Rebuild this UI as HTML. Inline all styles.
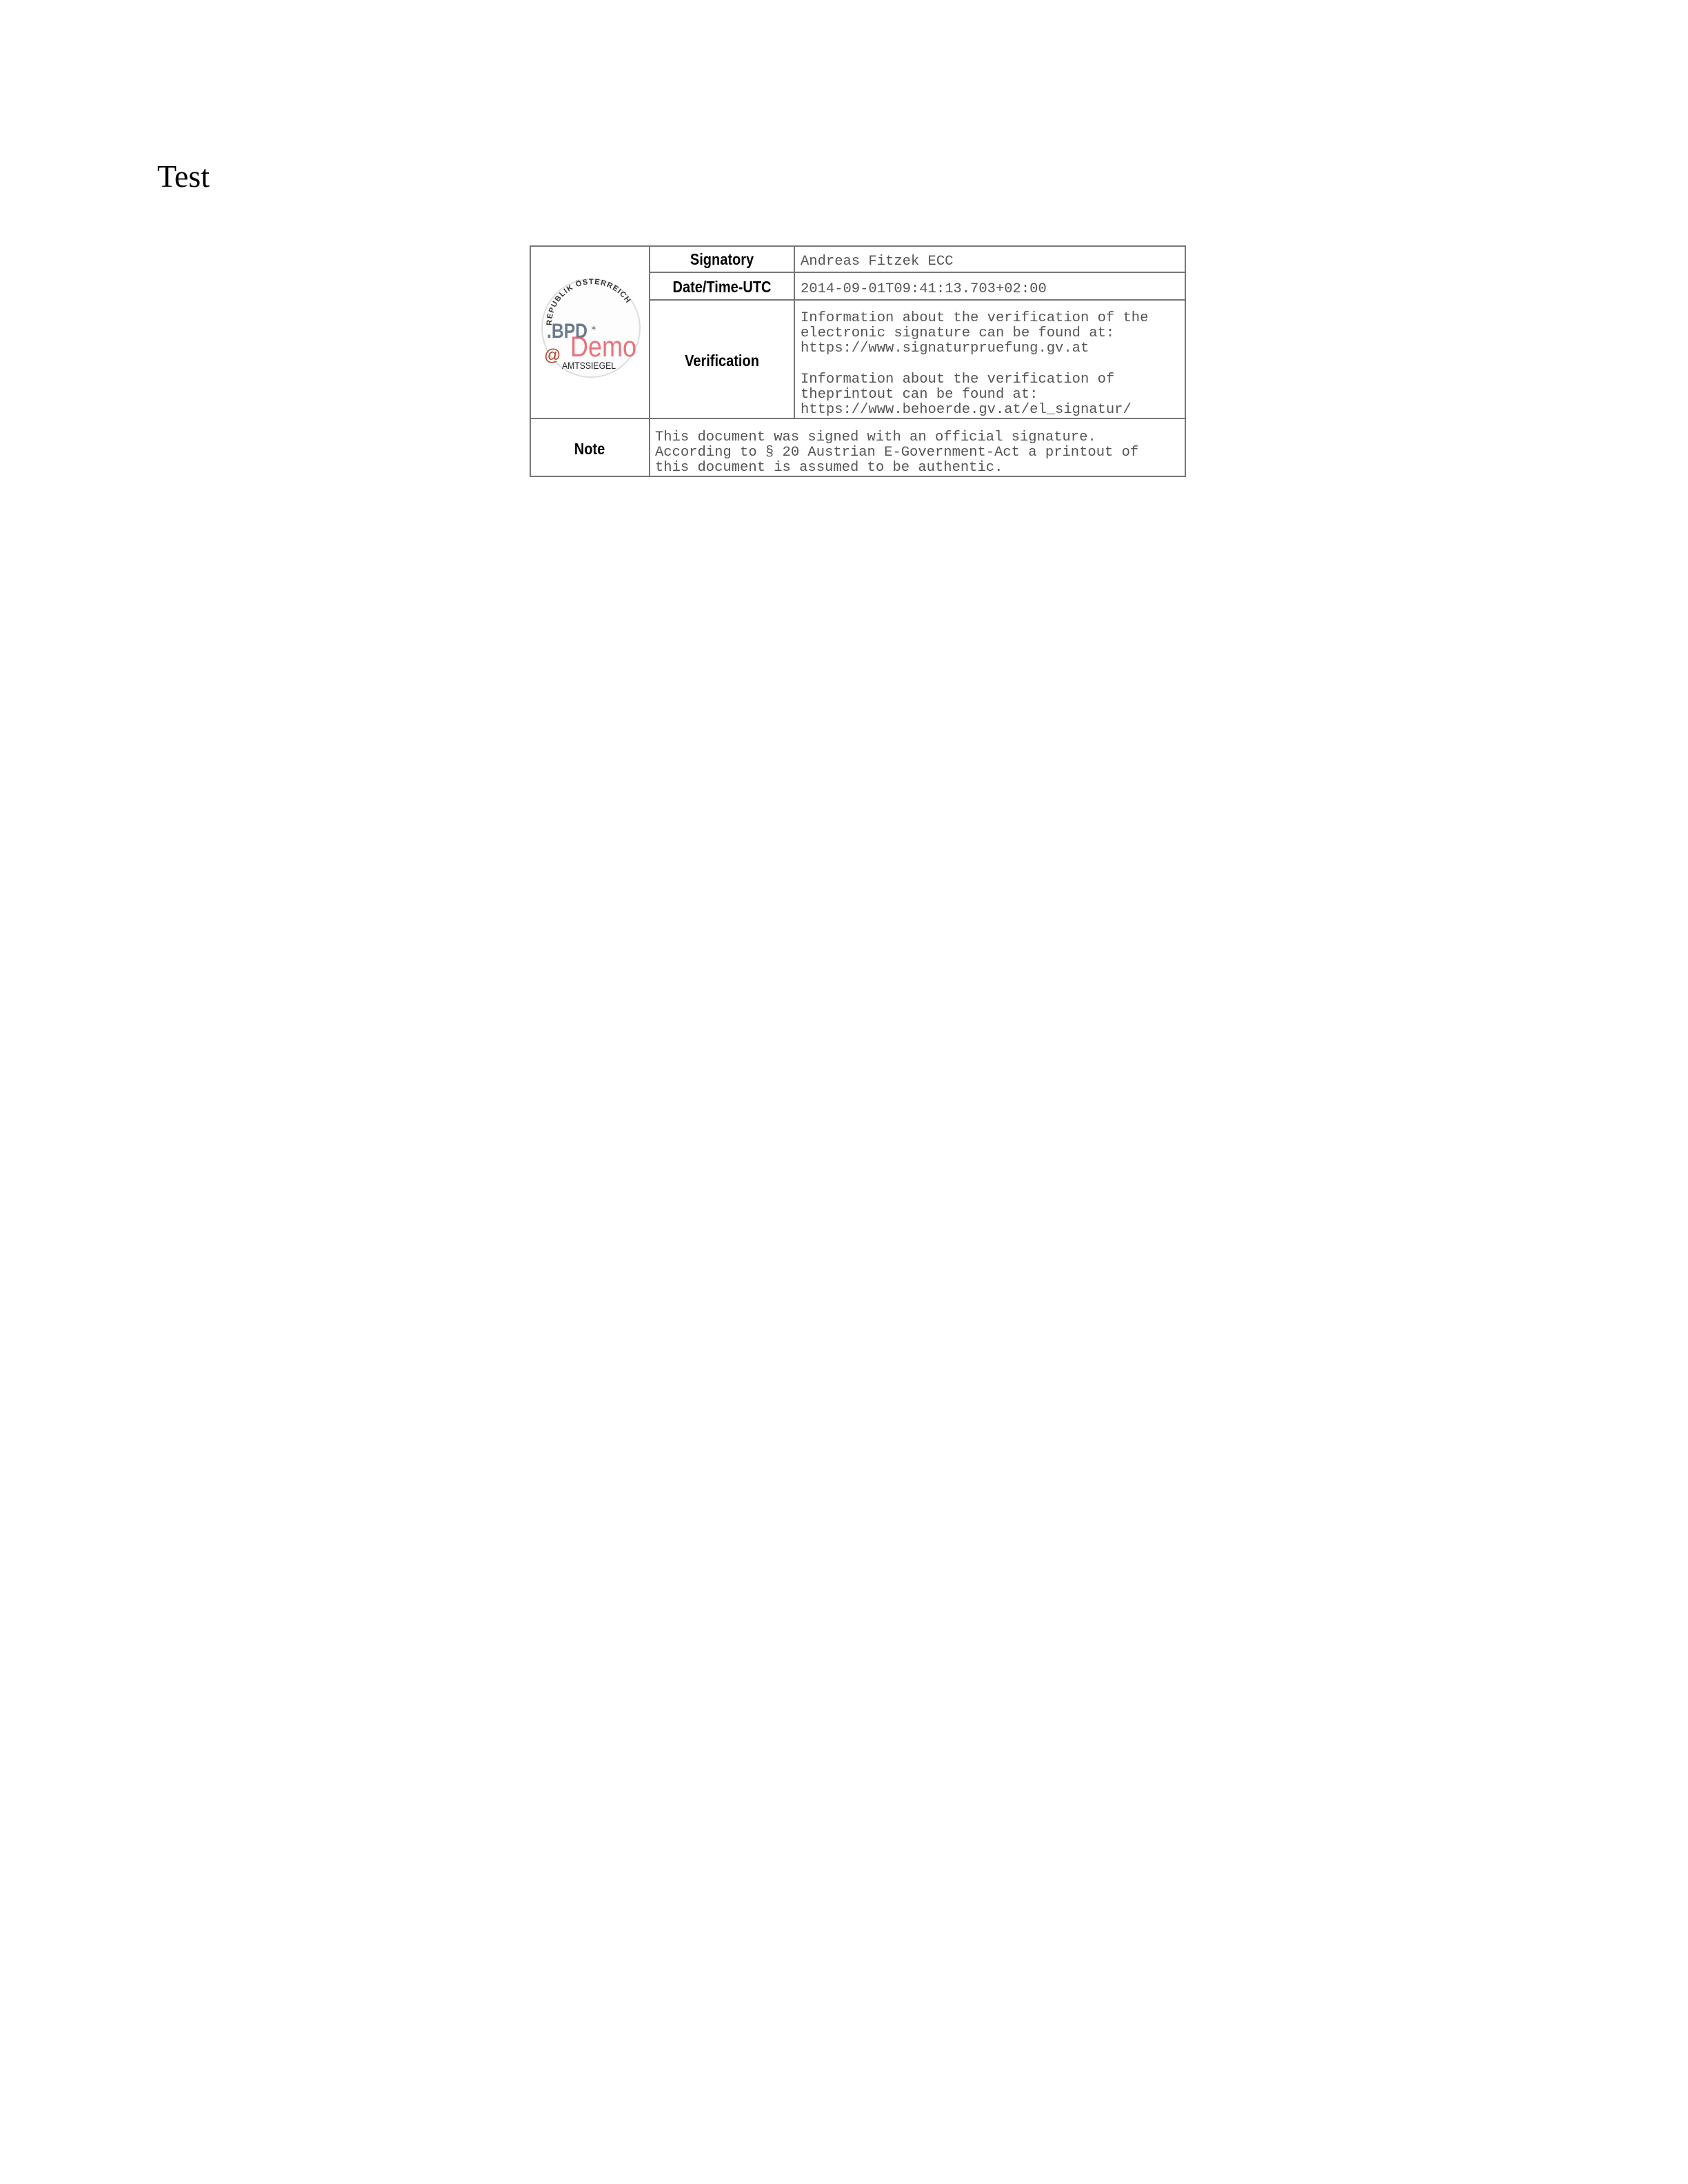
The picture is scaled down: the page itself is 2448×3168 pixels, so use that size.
<!DOCTYPE html>
<html><head><meta charset="utf-8"><style>
html,body{margin:0;padding:0;background:#fff;}
body{width:2448px;height:3168px;position:relative;overflow:hidden;}
.t{position:absolute;left:228px;top:229px;font:46px "Liberation Serif",serif;color:#000;}
.ln{position:absolute;background:#777;}
.lab{position:absolute;font:bold 20px "Liberation Sans",sans-serif;color:#000;text-align:center;transform:scaleY(1.15);}
.m{position:absolute;font:20.5px/22.2px "Liberation Mono",monospace;color:#555;white-space:pre;}
</style></head><body>
<div class="t">Test</div>
<div class="ln" style="left:768px;top:356px;width:952px;height:2px"></div>
<div class="ln" style="left:768px;top:690px;width:952px;height:2px"></div>
<div class="ln" style="left:768px;top:356px;width:2px;height:336px"></div>
<div class="ln" style="left:1718px;top:356px;width:2px;height:336px"></div>
<div class="ln" style="left:941px;top:356px;width:2px;height:336px"></div>
<div class="ln" style="left:1151px;top:356px;width:2px;height:252px"></div>
<div class="ln" style="left:942px;top:394px;width:778px;height:2px"></div>
<div class="ln" style="left:942px;top:434px;width:778px;height:2px"></div>
<div class="ln" style="left:768px;top:606px;width:952px;height:2px"></div>

<div class="lab" style="left:942px;width:210px;top:366px">Signatory</div>
<div class="lab" style="left:942px;width:210px;top:406px">Date/Time-UTC</div>
<div class="lab" style="left:942px;width:210px;top:513px">Verification</div>
<div class="lab" style="left:768px;width:174px;top:641px">Note</div>

<div class="m" style="left:1161px;top:369px">Andreas Fitzek ECC</div>
<div class="m" style="left:1161px;top:409px">2014-09-01T09:41:13.703+02:00</div>
<div class="m" style="left:1161px;top:451px">Information about the verification of the
electronic signature can be found at:
https://www.signaturpruefung.gv.at

Information about the verification of
theprintout can be found at:
https://www.behoerde.gv.at/el_signatur/</div>
<div class="m" style="left:950px;top:624px">This document was signed with an official signature.
According to § 20 Austrian E-Government-Act a printout of
this document is assumed to be authentic.</div>

<svg style="position:absolute;left:780px;top:400px" width="160" height="160" viewBox="0 0 160 160">
<circle cx="77" cy="76" r="71" fill="#fdfdfd" stroke="#ddd" stroke-width="2"/>
<defs><path id="arc" d="M20,72 A58,58 0 0 1 138,70"/></defs>
<text font-family="Liberation Sans,sans-serif" font-size="11" font-weight="bold" fill="#333" letter-spacing="1.2"><textPath href="#arc">REPUBLIK ÖSTERREICH</textPath></text>
<text x="13" y="90" font-family="Liberation Sans,sans-serif" font-size="30" font-weight="bold" fill="#6a7a8e" textLength="59" lengthAdjust="spacingAndGlyphs">.BPD</text>
<text x="76" y="80" font-size="12" fill="#888">✶</text>
<text x="47" y="117" font-family="Liberation Sans,sans-serif" font-size="42" fill="#e85a64" opacity="0.85" textLength="96" lengthAdjust="spacingAndGlyphs">Demo</text>
<text x="9" y="123" font-family="Liberation Sans,sans-serif" font-size="24" fill="#b5452e">@</text>
<text x="35" y="135" font-family="Liberation Sans,sans-serif" font-size="14" fill="#222" textLength="78" lengthAdjust="spacingAndGlyphs">AMTSSIEGEL</text>
</svg>
</body></html>
